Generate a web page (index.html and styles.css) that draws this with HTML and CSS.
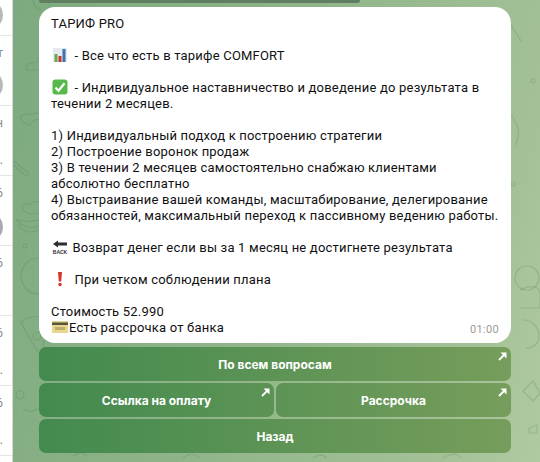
FILE: index.html
```html
<!DOCTYPE html>
<html lang="ru">
<head>
<meta charset="utf-8">
<title>ТАРИФ PRO</title>
<link rel="stylesheet" href="styles.css">
</head>
<body>
<div class="app">
  <aside class="sidebar">
    <div class="row"><span class="avatar"></span></div>
    <div class="row"><span class="snippet">т</span><span class="avatar"></span></div>
    <div class="row"><span class="snippet">н</span><span class="snippet lower">.</span></div>
    <div class="row"><span class="snippet">6</span><span class="avatar tinted"></span></div>
    <div class="row"><span class="snippet">6</span></div>
    <div class="row"><span class="snippet">6</span><span class="snippet lower">...</span></div>
    <div class="row"><span class="snippet">6</span><span class="snippet lower">.</span></div>
  </aside>
  <main class="chat">
    <svg class="doodles" viewBox="0 0 527 462" aria-hidden="true">
      <g fill="none" stroke="#4f7f55" stroke-opacity=".24" stroke-width="1.2">
        <path d="M20 0c0 6 4 10 8 10"/>
        <path d="M14 70c-4-6 6-8 10-8 2-6 6-10 8-8 2 4-2 6-1 8l-3 8z"/>
        <path d="M8 116c4-3 8-3 8-1 5-2 9-2 14-3 3-2 6 0 4 3 2 3-1 6-4 3-5 0-8 2-11 4 0 3-4 4-5 1-4 1-7-4-6-7z"/>
        <path d="M1 161l13 11c3 2 0 4-2 3L0 165"/>
        <path d="M9 208c0-4 6-5 8-3 3-5 11-4 12 0 3 3 0 7-4 8-6 2-12 1-16-5z"/>
        <path d="M3 219c4 6 14 12 24 6l3-6c-8 2-20 4-27 0z M5 224c2 8 18 12 24 1"/>
        <circle cx="12" cy="246" r="2"/>
        <circle cx="26" cy="276" r="18"/>
        <path d="M8 322c4-4 14-6 24-6l-2 43c-6-8-14-20-22-37z"/>
        <circle cx="24" cy="336" r="4"/>
        <circle cx="7" cy="395" r="4"/>
        <path d="M10 411c4-4 6 3 10 0 4-3 6-1 9-2"/>
        <circle cx="520" cy="81" r="2"/>
        <path d="M495 20c5 8 8 14 14 22"/>
        <path d="M498 115c8 10 10 20 4 30"/>
        <circle cx="500" cy="184" r="2"/>
        <circle cx="514" cy="278" r="12"/>
        <path d="M507 290c10-5 20-5 20 4v14h-20"/>
        <path d="M510 320c10 0 16 8 16 16s-6 12-13 12"/>
        <path d="M510 391l10-10 7 12-7 8z"/>
        <path d="M516 428l8-3v8h-8z"/>
        <path d="M60 456c5-4 10-4 14 0M170 458c6-5 12-5 16 0M300 458c6-4 10-4 14 0M430 458c8-5 14-5 18 0"/>
      </g>
    </svg>
    <div class="peek"></div>
    <div class="column">
      <article class="bubble">
        <p>ТАРИФ PRO</p>
        <p class="gap"><svg class="emoji" viewBox="0 0 16 16"><rect x="1" y="1" width="14" height="14" fill="#e4eaf0"/><rect x="2.500" y="7" width="3" height="8" fill="#6aa84f"/><rect x="6.500" y="9" width="3" height="6" fill="#c0392b"/><rect x="10.500" y="2" width="3" height="13" fill="#3f6fb5"/></svg> - Все что есть в тарифе COMFORT</p>
        <p class="gap"><svg class="emoji" viewBox="0 0 16 16"><rect x=".5" y=".5" width="15" height="15" rx="3" fill="#56b949"/><path d="M3.500 8.500l3 3.200 6-7.500" fill="none" stroke="#fff" stroke-width="2.200"/></svg> - Индивидуальное наставничество и доведение до результата в течении 2 месяцев.</p>
        <p class="gap">1) Индивидуальный подход к построению стратегии<br>2) Построение воронок продаж<br>3) В течении 2 месяцев самостоятельно снабжаю клиентами абсолютно бесплатно<br>4) Выстраивание вашей команды, масштабирование, делегирование обязанностей, максимальный переход к пассивному ведению работы.</p>
        <p class="gap"><svg class="emoji tight" viewBox="0 0 16 16"><path d="M1 5l5-3.500V3.500h9v3H6V8.500z" fill="#2e2e2e"/><text class="back" x="8" y="14.500" text-anchor="middle">BACK</text></svg> Возврат денег если вы за 1 месяц не достигнете результата</p>
        <p class="gap"><svg class="emoji" viewBox="0 0 16 16"><path d="M6 1h4L9.200 10.500H6.800z" fill="#d8342b"/><circle cx="8" cy="13.500" r="1.700" fill="#d8342b"/></svg> При четком соблюдении плана</p>
        <p class="gap">Стоимость 52.990<br><svg class="emoji card" viewBox="0 0 16 16"><rect y="2" width="16" height="12" fill="#e8d68c"/><rect y="3.500" width="16" height="2.500" fill="#55553c"/><rect x="3" y="8" width="10" height="3" fill="#bcae70"/></svg>Есть рассрочка от банка</p>
        <time class="stamp">01:00</time>
      </article>
      <nav class="keyboard">
        <a class="key wide">По всем вопросам<svg class="arrow" viewBox="0 0 9 9"><path d="M1 8L6 3" stroke="#fff" stroke-width="1.800"/><path d="M2.500 .5H8.500V6.500z" fill="#fff"/></svg></a>
        <a class="key">Ссылка на оплату<svg class="arrow" viewBox="0 0 9 9"><path d="M1 8L6 3" stroke="#fff" stroke-width="1.800"/><path d="M2.500 .5H8.500V6.500z" fill="#fff"/></svg></a>
        <a class="key">Рассрочка<svg class="arrow" viewBox="0 0 9 9"><path d="M1 8L6 3" stroke="#fff" stroke-width="1.800"/><path d="M2.500 .5H8.500V6.500z" fill="#fff"/></svg></a>
        <a class="key wide">Назад</a>
      </nav>
    </div>
  </main>
</div>
</body>
</html>
```

FILE: styles.css
```css
* { box-sizing: border-box; }
html, body { margin: 0; height: 100%; }
body { font-family: Roboto, "Liberation Sans", sans-serif; overflow: hidden; background: #fff; }
.app { display: flex; width: 540px; height: 462px; }
.sidebar { flex: 0 0 13px; height: 462px; overflow: hidden; background: #fff; border-right: 1px solid #d9d9d9; }
.row { position: relative; height: 70px; border-bottom: 1px solid #e4e4e4; overflow: hidden; }
.row:first-child { margin-top: -34px; }
.snippet { position: absolute; right: 9px; top: 10px; font-size: 12px; line-height: 14px; color: #8a8a8a; }
.snippet.lower { top: 47px; color: #777; }
.avatar { position: absolute; left: -27px; top: 34px; width: 30px; height: 30px; border-radius: 50%; background: #b8b8b8; }
.avatar.tinted { top: 36px; background: #a9a8b2; }
.chat { position: relative; flex: 1; height: 462px; overflow: hidden; background: linear-gradient(105deg, #7daa80 0%, #8eb388 42%, #a4c196 85%, #b0caa0 100%); }
.doodles { position: absolute; left: 0; top: 0; width: 527px; height: 462px; }
.peek { position: absolute; left: 26px; top: 0; width: 321px; height: 3px; background: #5f7f60; border-radius: 0 0 6px 6px; }
.column { position: relative; margin: 7px 0 0 26px; width: 472px; display: flex; flex-direction: column; gap: 4px; }
.bubble { position: relative; height: 336px; background: #fff; border-radius: 16px; padding: 9px 10px 0 12px; color: #111; font-size: 13px; line-height: 16px; letter-spacing: 0.2px; }
.bubble p { margin: 0; }
.bubble .gap { margin-top: 16px; }
.emoji { display: inline-block; width: 16px; height: 16px; vertical-align: 1px; margin: -4px 3px -4px 1px; }
.emoji.tight { margin-right: 1px; }
.emoji.card { margin-right: 1px; }
.back { font: 700 5px "Liberation Sans", sans-serif; letter-spacing: 0; fill: #2e2e2e; }
.stamp { position: absolute; right: 12px; bottom: 6px; font-size: 11px; line-height: 14px; letter-spacing: 0.3px; color: #9a9a9a; }
.keyboard { display: grid; grid-template-columns: 1fr 1fr; grid-auto-rows: 34px; gap: 2px; }
.key { position: relative; display: flex; align-items: center; justify-content: center; border-radius: 7px; background: linear-gradient(90deg, #438a4f 39px, #769d5b 511px) fixed; color: #fff; font-family: Inter, sans-serif; font-size: 12px; font-weight: 700; }
.key.wide { grid-column: 1 / 3; }
.arrow { position: absolute; top: 5px; right: 4px; width: 9px; height: 9px; }
```
